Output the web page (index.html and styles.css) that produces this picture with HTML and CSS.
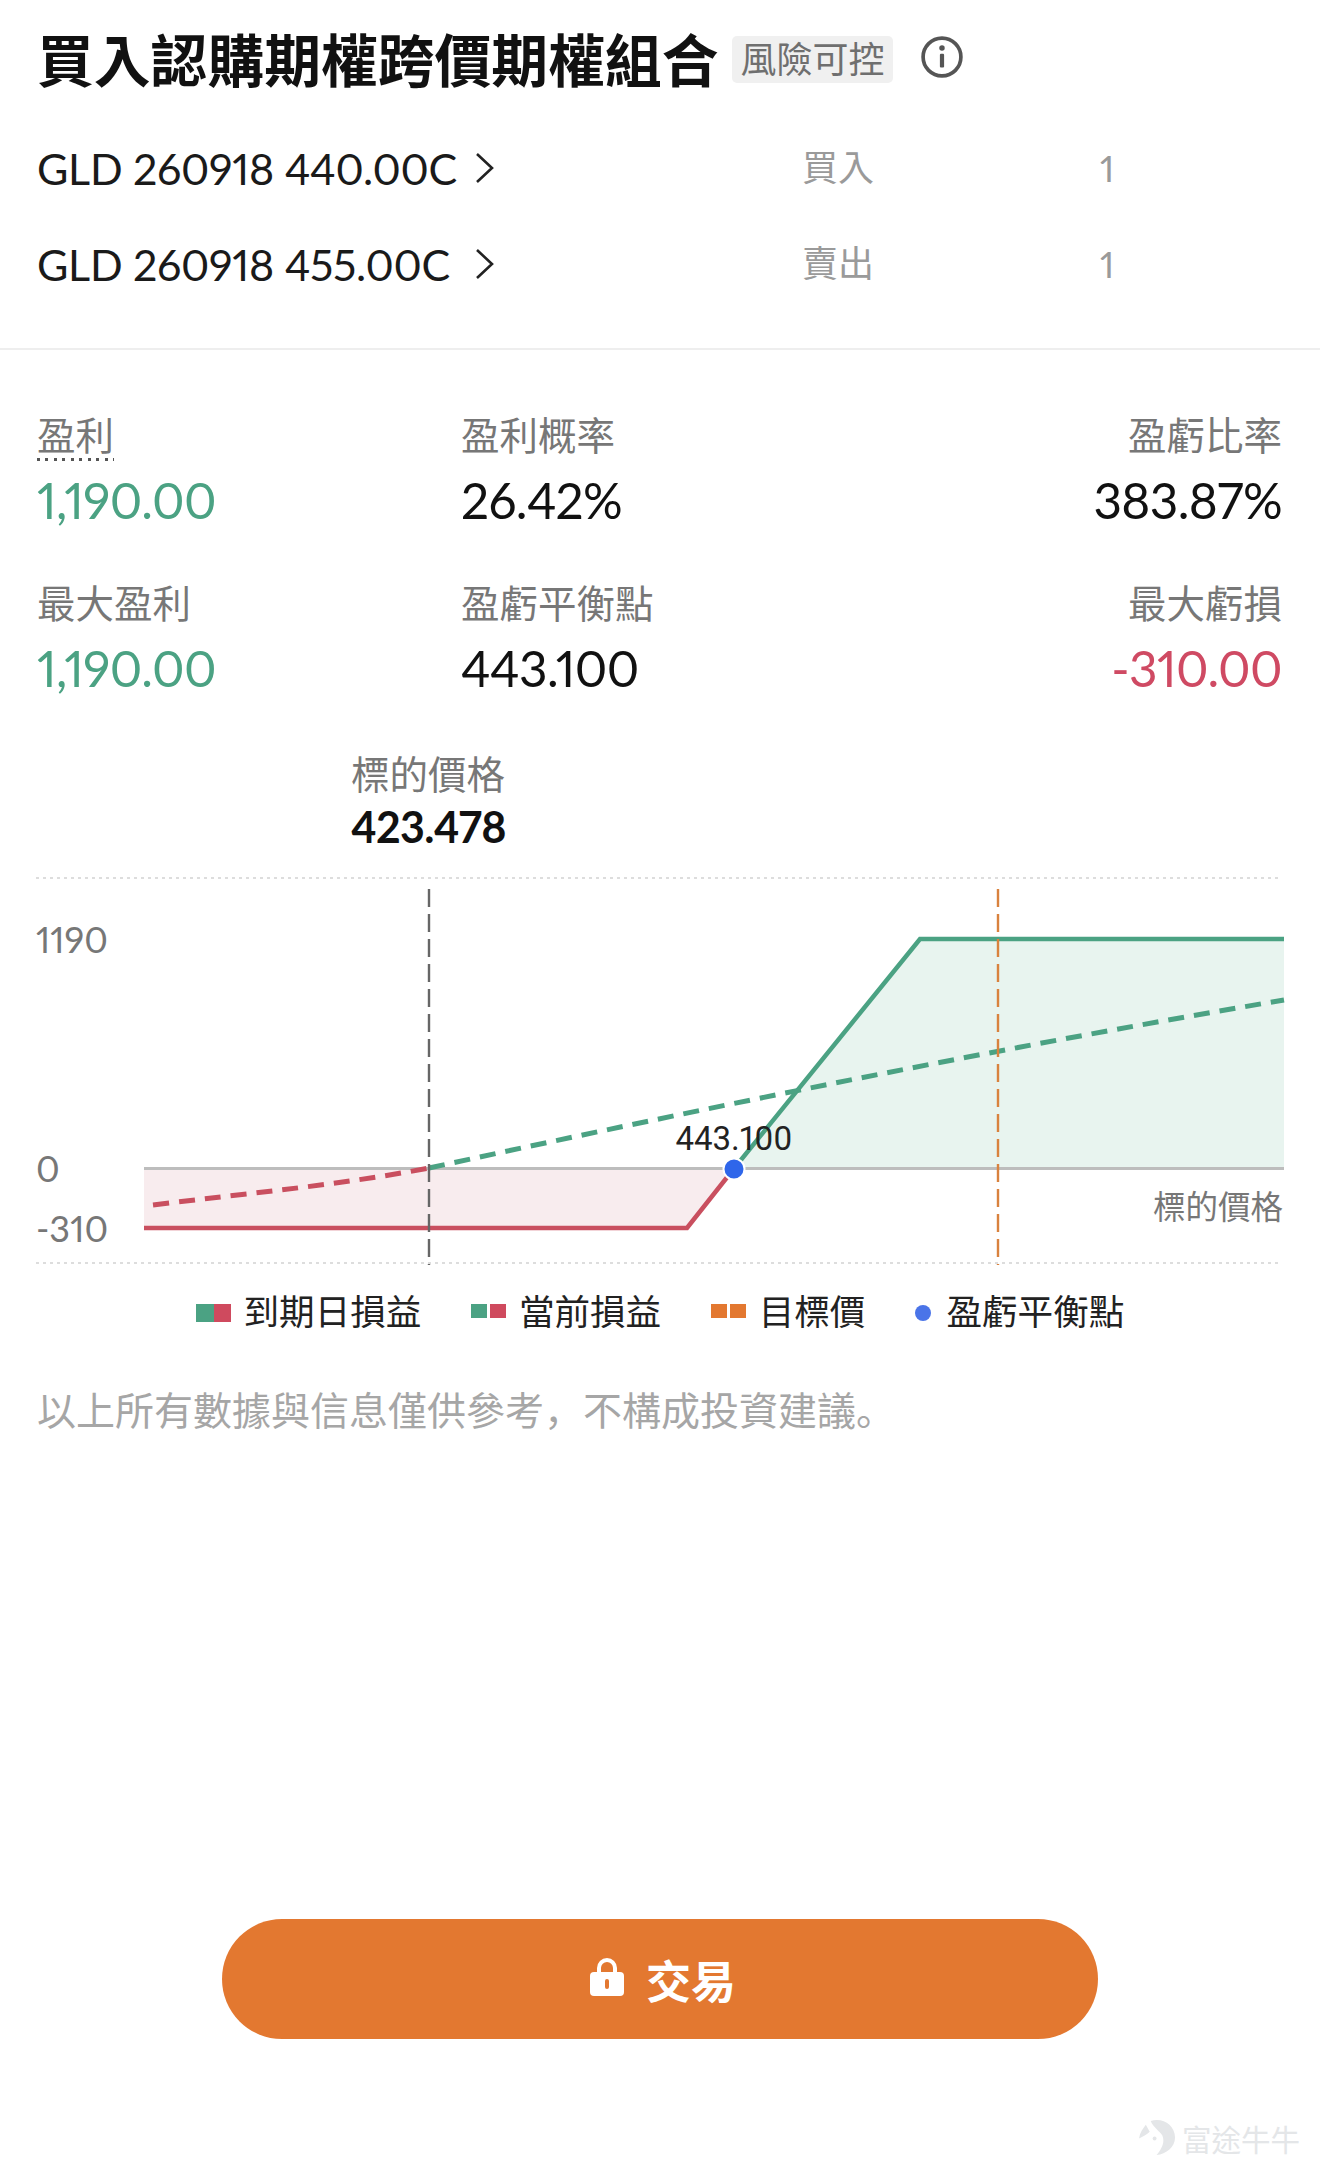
FILE: index.html
```html
<!DOCTYPE html>
<html lang="zh-Hant">
<head>
<meta charset="utf-8">
<title>買入認購期權跨價期權組合</title>
<link rel="stylesheet" href="styles.css">
</head>
<body>
<main class="page">
  <header class="title-row">
    <h1 class="title">買入認購期權跨價期權組合</h1>
    <span class="badge">風險可控</span>
    <svg class="info" viewBox="0 0 40 40" aria-hidden="true">
      <circle cx="20" cy="20" r="18" class="info-ring"/>
      <rect x="18" y="17" width="4" height="13" rx="1" class="info-mark"/>
      <circle cx="20" cy="11.5" r="2.6" class="info-mark"/>
    </svg>
  </header>

  <section class="legs">
    <div class="leg">
      <div class="leg-name"><span class="leg-code">GLD 260918 440.00C</span>
        <svg class="chevron" viewBox="0 0 20 32" aria-hidden="true"><polyline points="2,2 17,16 2,30"/></svg>
      </div>
      <div class="leg-side">買入</div>
      <div class="leg-qty">1</div>
    </div>
    <div class="leg">
      <div class="leg-name"><span class="leg-code">GLD 260918 455.00C</span>
        <svg class="chevron" viewBox="0 0 20 32" aria-hidden="true"><polyline points="2,2 17,16 2,30"/></svg>
      </div>
      <div class="leg-side">賣出</div>
      <div class="leg-qty">1</div>
    </div>
  </section>

  <section class="stats">
    <div class="stat"><div class="stat-label"><span class="dotted">盈利</span></div><div class="stat-value up">1,190.00</div></div>
    <div class="stat"><div class="stat-label">盈利概率</div><div class="stat-value">26.42%</div></div>
    <div class="stat end"><div class="stat-label">盈虧比率</div><div class="stat-value">383.87%</div></div>
    <div class="stat"><div class="stat-label">最大盈利</div><div class="stat-value up">1,190.00</div></div>
    <div class="stat"><div class="stat-label">盈虧平衡點</div><div class="stat-value">443.100</div></div>
    <div class="stat end"><div class="stat-label">最大虧損</div><div class="stat-value down">-310.00</div></div>
  </section>

  <section class="spot">
    <div class="stat-label">標的價格</div>
    <div class="spot-value">423.478</div>
  </section>

  <svg class="chart" viewBox="0 870 1320 400" aria-label="損益圖">
    <line x1="36" y1="877" x2="1282" y2="877" class="grid"/>
    <line x1="36" y1="1262" x2="1282" y2="1262" class="grid"/>
    <polygon points="144,1167.5 734,1167.5 687,1227 144,1227" class="fill-loss"/>
    <polygon points="734,1167.5 920,938 1284,938 1284,1167.5" class="fill-gain"/>
    <line x1="144" y1="1167.5" x2="1284" y2="1167.5" class="axis"/>
    <polyline points="144,1227 687,1227 734,1167.5" class="line-loss"/>
    <polyline points="734,1167.5 920,938 1284,938" class="line-gain"/>
    <path d="M153,1204 C250,1192 340,1184 429,1167" class="dash-loss"/>
    <path d="M429,1167 C714,1105 999,1047 1284,999" class="dash-gain"/>
    <line x1="429" y1="888" x2="429" y2="1264" class="v-spot"/>
    <line x1="998" y1="888" x2="998" y2="1264" class="v-target"/>
    <text x="36" y="952" class="tick">1190</text>
    <text x="36" y="1181" class="tick">0</text>
    <text x="36" y="1241" class="tick">-310</text>
    <text x="1283" y="1218" class="tick axis-name">標的價格</text>
    <text x="734" y="1149" class="be-label">443.100</text>
    <circle cx="734" cy="1168" r="10.5" class="be-dot"/>
  </svg>

  <ul class="legend">
    <li class="legend-item"><span class="swatch solid"><i class="s-g"></i><i class="s-r"></i></span><span class="lg-text">到期日損益</span></li>
    <li class="legend-item"><span class="swatch split"><i class="s-g"></i><i class="s-r"></i></span><span class="lg-text">當前損益</span></li>
    <li class="legend-item"><span class="swatch split"><i class="s-o"></i><i class="s-o"></i></span><span class="lg-text">目標價</span></li>
    <li class="legend-item wide"><span class="dot"></span><span class="lg-text">盈虧平衡點</span></li>
  </ul>

  <p class="disclaimer">以上所有數據與信息僅供參考<span class="comma" lang="zh-Hans">，</span>不構成投資建議<span class="comma" lang="zh-Hans">。</span></p>

  <button class="trade" type="button">
    <svg class="lock" viewBox="0 0 34 38" aria-hidden="true">
      <path d="M9 16V10a8 8 0 0 1 16 0v6" class="lock-bow"/>
      <rect x="0" y="14" width="34" height="24" rx="4" class="lock-body"/>
      <rect x="15" y="21" width="4" height="10" rx="2" class="lock-slot"/>
    </svg>
    <span>交易</span>
  </button>

  <div class="watermark">
    <svg class="wm-logo" viewBox="0 0 38 38" aria-hidden="true">
      <path d="M12 2 C24 -2 37 6 37 19 C37 29 28 36 18 37 C23 31 27 24 24 17 C21 12 15 9 12 2 Z"/>
      <path d="M7 6 C4 10 1 14 0 20 C4 18 8 16 11 13 Z"/>
      <circle cx="16" cy="20" r="2"/>
    </svg>
    <span>富途牛牛</span>
  </div>
</main>
</body>
</html>
```
FILE: styles.css
```css
* { box-sizing: border-box; }
html, body { margin: 0; padding: 0; background: #fff; }
body { font-family: Lato, "Noto Sans CJK TC", "Noto Sans", sans-serif; color: #111; font-variant-numeric: proportional-nums; }
.page { width: 1320px; height: 2177px; display: flex; flex-direction: column; overflow: hidden; }

.title-row { height: 120px; padding-left: 37px; display: flex; align-items: center; }
.title { margin: -5px 0 0; font-size: 56.8px; line-height: 1; font-weight: 700; font-family: "Noto Sans CJK TC", sans-serif; color: #111; white-space: nowrap; }
.badge { margin-left: 13.4px; margin-top: -2px; height: 47px; width: 161px; padding-bottom: 4px; display: flex; align-items: center; justify-content: center; background: #f0f0f0; border-radius: 5px; font-size: 36px; color: #6f6f6f; font-family: "Noto Sans CJK TC", sans-serif; }
.info { width: 42px; height: 42px; margin-left: 28.5px; margin-top: -6px; }
.info-ring { fill: none; stroke: #555; stroke-width: 3.5; }
.info-mark { fill: #555; }

.legs { padding-bottom: 36px; border-bottom: 2px solid #eeeeee; }
.leg { height: 96px; padding-left: 37px; display: flex; align-items: center; }
.leg-name { width: 765px; font-size: 43px; letter-spacing: -0.3px; color: #1a1a1a; display: flex; align-items: center; gap: 17px; }
.leg-code { width: 421px; white-space: nowrap; }
.chevron { width: 20px; height: 32px; fill: none; stroke: #222; stroke-width: 2.6; }
.leg-side { width: 298px; height: 48px; line-height: 46px; font-size: 36px; color: #9a9a9a; }
.leg-qty { font-size: 36px; color: #9a9a9a; }

.stats { margin-top: 59px; padding: 0 38px 0 37px; display: grid; grid-template-columns: 424px 1fr 1fr; row-gap: 40px; }
.stat.end { text-align: right; }
.stat-label { height: 56px; line-height: 48px; font-size: 38.5px; color: #777; font-family: "Noto Sans CJK TC", sans-serif; }
.dotted { display: inline-block; height: 52px; background: repeating-linear-gradient(90deg, #555 0 3px, transparent 3px 8.5px) left bottom / 100% 3px no-repeat; }
.stat-value { height: 72px; line-height: 70px; font-size: 49.5px; letter-spacing: -0.6px; color: #111; }
.stat-value.up { color: #4ba283; }
.stat-value.down { color: #cf4a63; }

.spot { margin-top: 43px; padding-left: 351px; }
.spot-value { height: 48px; line-height: 46px; font-size: 43px; letter-spacing: -0.6px; font-weight: 700; color: #111; }

.chart { display: block; width: 1320px; height: 400px; margin-top: 19px; flex: none; }
.grid { stroke: #dddddd; stroke-width: 2; stroke-dasharray: 3 4; }
.fill-loss { fill: #f8ecee; }
.fill-gain { fill: #e8f4ef; }
.axis { stroke: #bdbdbd; stroke-width: 3; }
.line-loss { fill: none; stroke: #c94f5f; stroke-width: 4.5; }
.line-gain { fill: none; stroke: #4ba283; stroke-width: 4.5; }
.dash-loss { fill: none; stroke: #c94f5f; stroke-width: 5; stroke-dasharray: 16 10; }
.dash-gain { fill: none; stroke: #4ba283; stroke-width: 5; stroke-dasharray: 16 10; }
.v-spot { stroke: #666; stroke-width: 2.4; stroke-dasharray: 18 7; }
.v-target { stroke: #d9823e; stroke-width: 2.4; stroke-dasharray: 18 7; }
.tick { font-size: 36px; fill: #777; font-family: Lato, "Noto Sans CJK TC", sans-serif; }
.axis-name { font-size: 32.5px; text-anchor: end; font-family: "Noto Sans CJK TC", sans-serif; }
.be-label { font-size: 33px; fill: #222; text-anchor: middle; font-family: Roboto, sans-serif; }
.be-dot { fill: #2f66ea; stroke: #fff; stroke-width: 2; }

.legend { list-style: none; margin: 20px 0 0; padding: 0 0 0 196px; height: 44px; display: flex; align-items: center; gap: 50px; }
.legend-item { display: flex; align-items: center; gap: 12.5px; font-size: 35.6px; color: #222; font-family: "Noto Sans CJK TC", sans-serif; white-space: nowrap; }
.legend-item.wide { gap: 15px; }
.lg-text { padding-bottom: 8px; }
.swatch { width: 35px; height: 18px; display: flex; }
.swatch i { display: block; flex: 1; }
.swatch.split { justify-content: space-between; }
.swatch.split i { flex: none; width: 16px; height: 14px; }
.s-g { background: #4ba283; }
.s-r { background: #cf4a5e; }
.s-o { background: #e37830; }
.dot { width: 16px; height: 16px; border-radius: 50%; background: #4a74e8; }

.disclaimer { margin: 51px 0 0 37px; height: 50px; line-height: 44px; font-size: 39px; color: #a6a6a6; font-family: "Noto Sans CJK TC", sans-serif; white-space: nowrap; }
.comma { font-family: "Noto Sans CJK SC", sans-serif; }

.trade { margin: 483px 0 0 222px; width: 876px; height: 120px; padding: 0 0 0 6px; flex: none; border: 0; border-radius: 62px; background: #e37830; color: #fff; display: flex; align-items: center; justify-content: center; gap: 22px; font-size: 45px; font-weight: 700; font-family: "Noto Sans CJK TC", sans-serif; }
.lock { width: 34px; height: 38px; margin-top: -4px; }
.lock-bow { fill: none; stroke: #fff; stroke-width: 4; }
.lock-body { fill: #fff; }
.lock-slot { fill: #e37830; }

.watermark { margin: 80px 20px 0 0; align-self: flex-end; display: flex; align-items: center; gap: 6px; color: #e4e6e8; font-size: 29.5px; line-height: 36px; font-family: "Noto Sans CJK TC", sans-serif; }
.wm-logo { width: 37px; height: 37px; fill: #e4e6e8; }
```
